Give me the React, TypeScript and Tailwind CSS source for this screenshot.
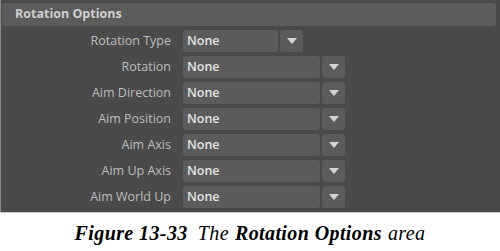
import React from "react";

const rows = [
  { label: "Rotation Type", short: true },
  { label: "Rotation" },
  { label: "Aim Direction" },
  { label: "Aim Position" },
  { label: "Aim Axis" },
  { label: "Aim Up Axis" },
  { label: "Aim World Up" },
];

const Dropdown = ({ short }: { short?: boolean }) => (
  <div className="flex h-[22px] gap-[2px]">
    <div
      className={`${short ? "w-[95px]" : "w-[137px]"} flex items-center rounded-[3px] bg-[#5b5b5b] pl-[4px] text-[12.5px] font-semibold text-[#e4e4e4]`}
    >
      None
    </div>
    <div className="flex w-[23px] items-center justify-center rounded-[3px] bg-[#5b5b5b]">
      <svg width="10" height="6" viewBox="0 0 10 6">
        <path d="M0 0 L10 0 L5 6 Z" fill="#d4d4d4" />
      </svg>
    </div>
  </div>
);

export default function App() {
  return (
    <div className="flex h-[251px] w-[500px] flex-col bg-white" style={{ fontFamily: "'Open Sans', sans-serif" }}>
      <div className="flex h-[212px] flex-col border-l border-[#8c8c8c] bg-[#4a4a4a] pl-[1px] pr-[4px] pt-[3px]">
        <div className="flex h-[23px] items-center rounded-[3px] bg-[#5c5c5c] pl-[13px] text-[12.5px] font-bold text-[#cfcfcf]">
          Rotation Options
        </div>
        <div className="mt-[4px] flex flex-col gap-[4px]">
          {rows.map((r) => (
            <div key={r.label} className="flex items-center">
              <div className="w-[169px] text-right text-[12.5px] text-[#bdbdbd]">{r.label}</div>
              <div className="ml-[12px]">
                <Dropdown short={r.short} />
              </div>
            </div>
          ))}
        </div>
      </div>
      <div className="h-px bg-[#c8c8c8]" />
      <div
        className="flex flex-1 items-center justify-center pl-[0px] pt-[1px] text-[20px] italic tracking-[0.4px] text-black"
        style={{ fontFamily: "'Liberation Serif', serif" }}
      >
        <span className="font-bold">Figure 13-33</span>
        <span className="ml-[10px]">The</span>
        <span className="ml-[6px] font-bold">Rotation Options</span>
        <span className="ml-[6px]">area</span>
      </div>
    </div>
  );
}
